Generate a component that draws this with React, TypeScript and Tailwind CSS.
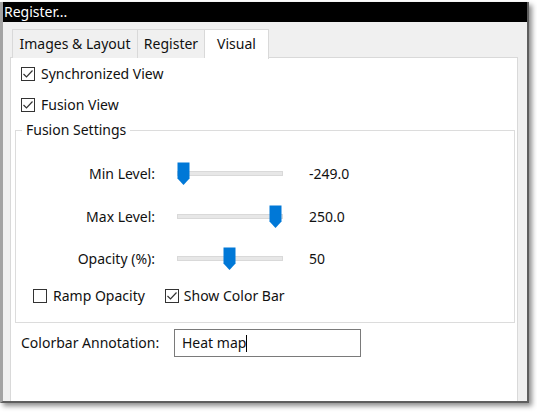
import React from "react";

function Check({ checked }: { checked: boolean }) {
  return (
    <div className="w-[14px] h-[14px] border border-[#333333] bg-white flex items-center justify-center shrink-0">
      {checked && (
        <svg width="12" height="12" viewBox="0 0 12 12">
          <path d="M1.5 6 L4.5 9 L10.5 2.5" fill="none" stroke="#333333" strokeWidth="1.2" />
        </svg>
      )}
    </div>
  );
}

function Slider({ pos }: { pos: number }) {
  return (
    <div className="relative w-[106px] h-[24px] shrink-0">
      <div className="absolute left-0 right-0 top-[9px] h-[5px] bg-[#e7e7e7] border border-[#d9d9d9]" />
      <svg
        className="absolute top-0"
        style={{ left: pos }}
        width="13"
        height="24"
        viewBox="0 0 13 24"
      >
        <path d="M0.5 0.5 H12.5 V16.5 L6.5 23 L0.5 16.5 Z" fill="#0078d7" />
      </svg>
    </div>
  );
}

function SliderRow({ label, pos, value, className }: { label: string; pos: number; value: string; className?: string }) {
  return (
    <div className={"flex items-center h-[24px] " + (className ?? "")}>
      <div className="w-[139px] text-right">{label}</div>
      <div className="w-[22px]" />
      <Slider pos={pos} />
      <div className="w-[26px]" />
      <div>{value}</div>
    </div>
  );
}

export default function App() {
  return (
    <div className="w-[537px] h-[414px] bg-white pt-[2px] font-['Noto_Sans',sans-serif] text-[14px] text-[#111] leading-none">
      <div className="w-[529px] h-[401px] border-l-[3px] border-l-[#a3a3a3] border-r-2 border-r-[#5e5e5e] border-b-2 border-b-[#5e5e5e] shadow-[3px_3px_5px_rgba(0,0,0,0.45)] bg-[#f0f0f0] flex flex-col">
        <div className="h-[20px] bg-black text-white text-[14px] flex items-center pl-[1px]">Register...</div>
        <div className="flex-1 flex flex-col pl-[7px] pr-[9px] pt-[7px] min-h-0">
          <div className="flex h-[29px] pl-[2px] relative z-10">
            <div className="w-[126px] h-[29px] bg-[#f0f0f0] border border-[#d9d9d9] border-b-0 flex items-center justify-center">Images &amp; Layout</div>
            <div className="w-[67px] h-[29px] bg-[#f0f0f0] border border-[#d9d9d9] border-b-0 border-l-0 flex items-center justify-center">Register</div>
            <div className="w-[64px] h-[30px] bg-white border border-[#d9d9d9] border-b-0 border-l-0 flex items-center justify-center pb-[1px]">Visual</div>
          </div>
          <div className="flex-1 bg-white border border-[#d9d9d9] border-b-0 -mt-[1px] flex flex-col">
            <div className="flex items-center h-[16px] pl-[10px] mt-[8px]">
              <Check checked />
              <span className="ml-[6px]">Synchronized View</span>
            </div>
            <div className="flex items-center h-[16px] pl-[10px] mt-[15px]">
              <Check checked />
              <span className="ml-[6px]">Fusion View</span>
            </div>
            <fieldset className="ml-[4px] mr-[2px] mt-[9px] border border-[#dcdcdc] h-[201px] flex flex-col">
              <legend className="ml-[6px] px-[4px] leading-[16px]">Fusion Settings</legend>
              <SliderRow label="Min Level:" pos={0} value="-249.0" className="mt-[24px]" />
              <SliderRow label="Max Level:" pos={92} value="250.0" className="mt-[19px]" />
              <SliderRow label="Opacity (%):" pos={46} value="50" className="mt-[18px]" />
              <div className="flex items-center h-[16px] mt-[17px] pl-[17px]">
                <Check checked={false} />
                <span className="ml-[6px]">Ramp Opacity</span>
                <div className="ml-[20px]">
                  <Check checked />
                </div>
                <span className="ml-[5px]">Show Color Bar</span>
              </div>
            </fieldset>
            <div className="flex items-center mt-[6px] pl-[10px]">
              <div className="w-[153px]">Colorbar Annotation:</div>
              <div className="w-[187px] h-[28px] border border-[#7a7a7a] flex items-center pl-[7px]">
                <span>Heat map</span>
                <span className="w-[1px] h-[17px] bg-black" />
              </div>
            </div>
          </div>
        </div>
      </div>
    </div>
  );
}
